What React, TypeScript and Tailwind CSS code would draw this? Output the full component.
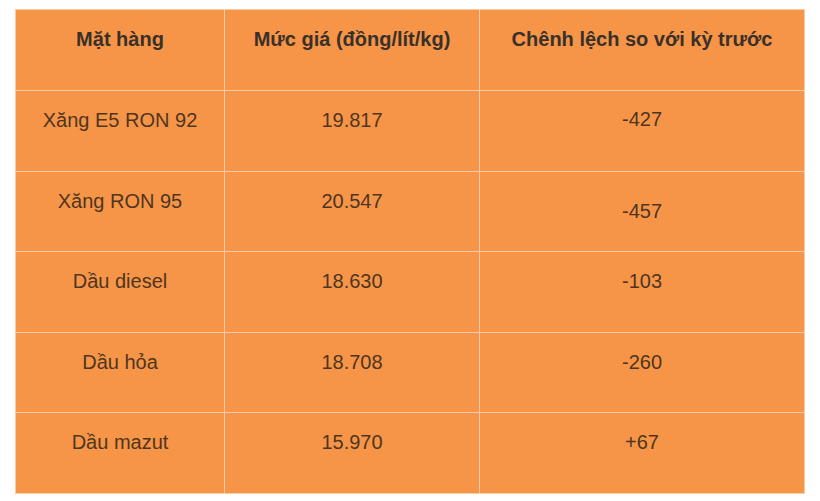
const rows = [
  { name: 'Xăng E5 RON 92', price: '19.817', diff: '-427', diffPad: 'pt-[17px]' },
  { name: 'Xăng RON 95', price: '20.547', diff: '-457', diffPad: 'pt-[28px]' },
  { name: 'Dầu diesel', price: '18.630', diff: '-103', diffPad: 'pt-[18px]' },
  { name: 'Dầu hỏa', price: '18.708', diff: '-260', diffPad: 'pt-[18px]' },
  { name: 'Dầu mazut', price: '15.970', diff: '+67', diffPad: 'pt-[18px]' },
]

export default function App() {
  return (
    <div className="h-[501px] w-[820px] bg-white pl-[15px] pt-[9px] font-['Liberation_Sans',Arial,sans-serif]">
      <table className="w-[789px] table-fixed border-collapse border border-[#e3d9cf] bg-[#f69547] text-center text-[20px] leading-[23px]">
        <colgroup>
          <col className="w-[209px]" />
          <col className="w-[255px]" />
          <col className="w-[325px]" />
        </colgroup>
        <thead>
          <tr className="h-[81px]">
            <th className="border border-[#f8cca4] px-2 pt-[18px] align-top font-bold text-[#3a302a]">Mặt hàng</th>
            <th className="border border-[#f8cca4] px-2 pt-[18px] align-top font-bold text-[#3a302a]">Mức giá (đồng/lít/kg)</th>
            <th className="border border-[#f8cca4] px-2 pt-[18px] align-top font-bold text-[#3a302a]">Chênh lệch so với kỳ trước</th>
          </tr>
        </thead>
        <tbody>
          {rows.map((r) => (
            <tr key={r.name} className="h-[80.6px]">
              <td className="border border-[#f8cca4] px-2 pt-[18px] align-top text-[#4f3520]">{r.name}</td>
              <td className="border border-[#f8cca4] px-2 pt-[18px] align-top text-[#4f3520]">{r.price}</td>
              <td className={`border border-[#f8cca4] px-2 align-top text-[#4f3520] ${r.diffPad}`}>{r.diff}</td>
            </tr>
          ))}
        </tbody>
      </table>
    </div>
  )
}
